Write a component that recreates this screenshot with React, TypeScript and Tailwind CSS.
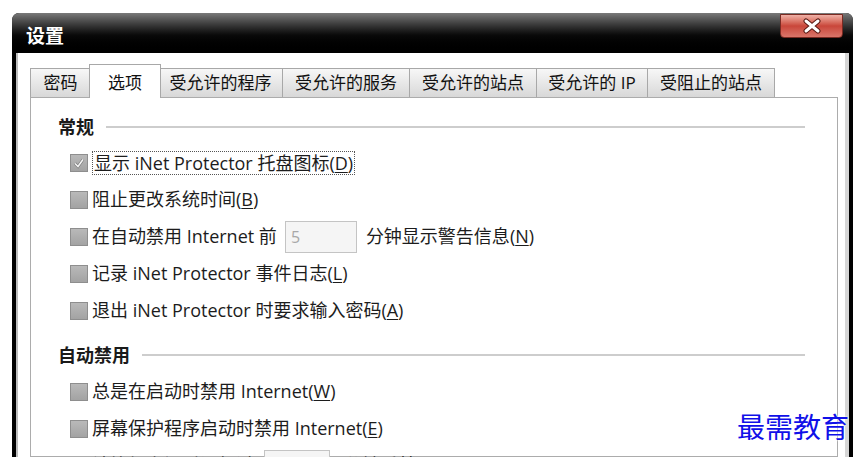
import React from "react";

const Acc = ({ k }: { k: string }) => (
  <>
    (<span className="underline underline-offset-2">{k}</span>)
  </>
);

const CB = ({ checked }: { checked?: boolean }) => (
  <div className="w-[18px] h-[18px] shrink-0 border border-[#8e8e8e] bg-gradient-to-b from-[#b9b9b9] to-[#a3a3a3] flex items-center justify-center">
    {checked && (
      <svg width="14" height="14" viewBox="0 0 14 14">
        <polyline points="3,7.5 6,10.5 11,3.5" fill="none" stroke="#7a7a7a" strokeWidth="3" />
        <polyline points="3,7.5 6,10.5 11,3.5" fill="none" stroke="#f2f2f2" strokeWidth="1.6" />
      </svg>
    )}
  </div>
);

const Row = ({ children, checked }: { children: React.ReactNode; checked?: boolean }) => (
  <div className="h-[37px] flex items-center pl-[12px] shrink-0">
    <CB checked={checked} />
    <div className="ml-[4px] flex items-center whitespace-nowrap">{children}</div>
  </div>
);

const Header = ({ title, className }: { title: string; className?: string }) => (
  <div className={"h-[24px] flex items-center shrink-0 " + (className ?? "")}>
    <span className="font-bold text-[18px] text-[#1a1a1a]">{title}</span>
    <div className="flex-1 h-[2px] bg-[#cdcdcd] ml-[12px]" />
  </div>
);

const Tab = ({ label, w, selected }: { label: string; w: string; selected?: boolean }) =>
  selected ? (
    <div
      className={
        "h-[34px] -mx-[2px] -mb-px relative z-10 bg-white border border-b-0 border-[#a8a8a8] flex items-start justify-center pt-[5px] text-[17px] text-[#111] " +
        w
      }
    >
      {label}
    </div>
  ) : (
    <div
      className={
        "h-[29px] border border-b-0 border-[#a8a8a8] -ml-px first:ml-0 bg-gradient-to-b from-[#f7f7f7] to-[#d8d8d8] flex items-center justify-center text-[17px] text-[#111] " +
        w
      }
    >
      {label}
    </div>
  );

export default function App() {
  return (
    <div className="w-[860px] h-[457px] bg-white overflow-hidden relative font-['Open_Sans','Noto_Sans_CJK_SC',sans-serif]">
      <div className="pt-[13px] pl-[12px] pr-[7px] h-full">
        <div className="h-full flex flex-col bg-black rounded-t-[7px] overflow-hidden">
          {/* title bar */}
          <div className="h-[40px] shrink-0 flex justify-between items-start bg-gradient-to-b from-[#7a7a7a] via-[#0a0a0a] via-55% to-black">
            <div className="pl-[14px] pt-[10px] text-white font-bold text-[19px] leading-[26px]">设置</div>
            <div className="mt-px mr-[10px] w-[63px] h-[24px] rounded-b-[4px] border border-[#7a2a22] bg-gradient-to-b from-[#eeb0a6] via-[#c9463a] to-[#d9756a] flex items-center justify-center">
              <svg width="20" height="16" viewBox="0 0 20 16">
                <path d="M4 3 L16 13 M16 3 L4 13" stroke="#5a1a14" strokeWidth="5" strokeLinecap="round" />
                <path d="M4 3 L16 13 M16 3 L4 13" stroke="#ffffff" strokeWidth="3" strokeLinecap="round" />
              </svg>
            </div>
          </div>
          {/* client */}
          <div className="flex-1 flex min-h-0">
            <div className="w-[4px] bg-black shrink-0" />
            <div className="w-[2px] bg-[#bdbdbd] shrink-0" />
            <div className="flex-1 bg-white pl-[12px] pr-[7px] pt-[11px] flex flex-col min-w-0">
              {/* tabs */}
              <div className="flex items-end shrink-0">
                <Tab label="密码" w="w-[61px]" />
                <Tab label="选项" w="w-[72px]" selected />
                <Tab label="受允许的程序" w="w-[125px]" />
                <Tab label="受允许的服务" w="w-[128px]" />
                <Tab label="受允许的站点" w="w-[128px]" />
                <Tab label="受允许的 IP" w="w-[112px]" />
                <Tab label="受阻止的站点" w="w-[128px]" />
              </div>
              {/* panel */}
              <div className="flex-1 border border-[#acacac] pl-[27px] pr-[32px] pt-[17px] flex flex-col text-[18px] text-[#1c1c1c] min-h-0">
                <Header title="常规" />
                <div className="h-[5px] shrink-0" />
                <Row checked>
                  <span className="border border-dotted border-[#555] px-px leading-[22px]">
                    显示 iNet Protector 托盘图标<Acc k="D" />
                  </span>
                </Row>
                <Row>
                  阻止更改系统时间<Acc k="B" />
                </Row>
                <Row>
                  <span>在自动禁用 Internet 前</span>
                  <div className="ml-[8px] w-[72px] h-[32px] border border-[#c4c4c4] bg-[#f5f5f5] flex items-center pl-[5px] text-[#a8a8a8] text-[16px]">
                    5
                  </div>
                  <span className="ml-[9px]">
                    分钟显示警告信息<Acc k="N" />
                  </span>
                </Row>
                <Row>
                  记录 iNet Protector 事件日志<Acc k="L" />
                </Row>
                <Row>
                  退出 iNet Protector 时要求输入密码<Acc k="A" />
                </Row>
                <Header title="自动禁用" className="mt-[14px]" />
                <div className="h-[6px] shrink-0" />
                <Row>
                  总是在启动时禁用 Internet<Acc k="W" />
                </Row>
                <Row>
                  屏幕保护程序启动时禁用 Internet<Acc k="E" />
                </Row>
                <Row>
                  <span>计算机空闲时间超过</span>
                  <div className="ml-[10px] w-[66px] h-[32px] border border-[#c4c4c4] bg-[#f5f5f5]" />
                  <span className="ml-[14px]">
                    分钟后禁用 Internet<Acc k="I" />
                  </span>
                </Row>
              </div>
            </div>
            <div className="w-[4px] bg-[#d6d6d6] shrink-0" />
            <div className="w-[4px] bg-black shrink-0" />
          </div>
        </div>
      </div>
      {/* watermark */}
      <div className="absolute left-[737px] top-[408px] text-[28px] leading-[36px] text-[#1010e8] font-['Noto_Sans_CJK_SC',sans-serif] [text-shadow:0_0_2px_#fff,0_0_2px_#fff]">
        最需教育
      </div>
    </div>
  );
}
